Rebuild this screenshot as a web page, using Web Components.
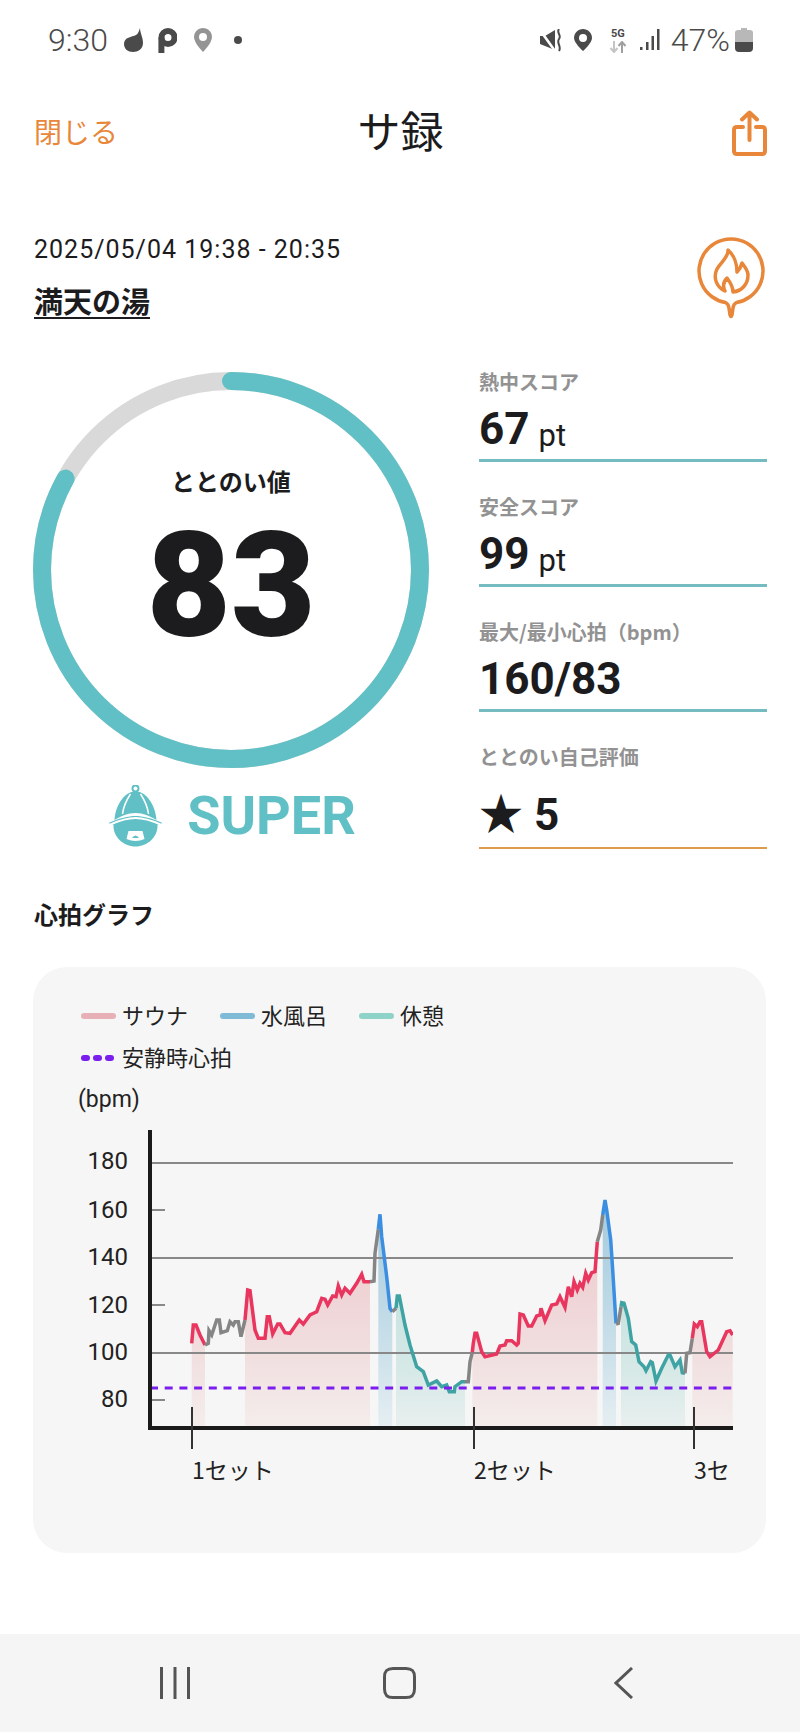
<!DOCTYPE html>
<html lang="ja">
<head>
<meta charset="utf-8">
<title>サ録</title>
<style>
    html, body { margin: 0; padding: 0; background: #fff; }
    body {
        width: 800px;
        height: 1732px;
        overflow: hidden;
        display: flex;
        flex-direction: column;
        font-family: Roboto, "Noto Sans CJK JP", sans-serif;
        color: #1c1c1e;
    }
</style>
</head>
<body>
    <status-bar></status-bar>
    <app-header title="サ録"></app-header>
    <session-meta date="2025/05/04 19:38 - 20:35" place="満天の湯"></session-meta>
    <score-row>
        <score-ring slot="ring" value="83" label="ととのい値" rank="SUPER"></score-ring>
        <stat-item label="熱中スコア" value="67" unit="pt"></stat-item>
        <stat-item label="安全スコア" value="99" unit="pt"></stat-item>
        <stat-item label="最大/最小心拍（bpm）" value="160/83"></stat-item>
        <stat-item label="ととのい自己評価" value="★ 5" accent></stat-item>
    </score-row>
    <section-title>心拍グラフ</section-title>
    <heart-card></heart-card>
    <nav-bar></nav-bar>

<script>
const ORANGE = "#e8873a";
const TEAL = "#61c0c5";

class StatusBar extends HTMLElement {
    constructor() {
        super();
        this.attachShadow({ mode: "open" }).innerHTML = `
            <style>
                :host { display: flex; height: 80px; padding: 0 47px 0 48px; align-items: center; justify-content: space-between; color: #4a4a4a; font: 300 32px Roboto, sans-serif; box-sizing: border-box; }
                .side { display: flex; align-items: center; }
                svg { display: block; }
                .five { position: relative; width: 18px; height: 25px; margin: 0 13px 0 17px; }
                .five b { display: block; font: 700 11px/11px Roboto, sans-serif; text-align: center; }
                .five svg { position: absolute; left: 0; bottom: 0; }
            </style>
            <div class="side">
                <span>9:30</span>
                <svg style="margin-left:16px" width="19" height="24" viewBox="0 0 19 24" fill="#4a4a4a"><path d="M16 0C16 5 19 9 19 15C19 21 14 24 9 24C4 24 0 21 0 16C0 9 8 9 12 7C14 6 15 3 16 0Z"/></svg>
                <svg style="margin-left:15px" width="19" height="25" viewBox="0 0 19 25" fill="none" stroke="#4a4a4a" stroke-width="6"><circle cx="10" cy="9.500" r="6.500"/><path d="M3.400 9.500V25"/></svg>
                <svg style="margin-left:17px" width="18" height="24" viewBox="0 0 18 24"><path fill="#949494" d="M9 0C4 0 0 4 0 9C0 15 9 24 9 24C9 24 18 15 18 9C18 4 14 0 9 0Z"/><circle cx="9" cy="9" r="4" fill="#fff"/></svg>
                <svg style="margin-left:22px" width="8" height="8" viewBox="0 0 8 8"><circle cx="4" cy="4" r="4" fill="#4a4a4a"/></svg>
            </div>
            <div class="side">
                <svg width="23" height="23" viewBox="0 0 23 23" fill="#4a4a4a"><path d="M0 7H5L15 1V21L0 15Z"/><path d="M0 1L15 22" stroke="#fff" stroke-width="2.500"/><path d="M19 0C16 4 22 6 19 10C16 14 22 17 19 22" fill="none" stroke="#4a4a4a" stroke-width="2"/></svg>
                <svg style="margin-left:11px" width="18" height="22" viewBox="0 0 18 22"><path fill="#4a4a4a" d="M9 0C4 0 0 4 0 9C0 14 9 22 9 22C9 22 18 14 18 9C18 4 14 0 9 0Z"/><circle cx="9" cy="9" r="4" fill="#fff"/></svg>
                <div class="five"><b>5G</b><svg width="18" height="12" viewBox="0 0 18 12" fill="none" stroke-width="2"><path d="M5 0V10M1.500 7L5 11L8.500 7" stroke="#c4c4c4"/><path d="M13 12V2M9.500 5L13 1L16.500 5" stroke="#a0a0a0"/></svg></div>
                <svg width="20" height="22" viewBox="0 0 20 22" fill="#4a4a4a"><rect x="0" y="18" width="2.500" height="3"/><rect x="6" y="13" width="2.500" height="8"/><rect x="11.500" y="7" width="2.500" height="14"/><rect x="17" y="0" width="2.500" height="21"/></svg>
                <span style="margin-left:11px">47%</span>
                <svg style="margin-left:5px" width="18" height="24" viewBox="0 0 18 24"><path fill="#b8b8b8" d="M6 0H12V2H15Q18 2 18 5V14H0V5Q0 2 3 2H6Z"/><path fill="#4a4a4a" d="M0 14H18V20Q18 24 14 24H4Q0 24 0 20Z"/></svg>
            </div>
        `;
    }
}

class AppHeader extends HTMLElement {
    constructor() {
        super();
        this.attachShadow({ mode: "open" }).innerHTML = `
            <style>
                :host { display: grid; grid-template-columns: 1fr auto 1fr; align-items: center; height: 106px; padding: 0 33px 0 34px; font-family: "Noto Sans CJK JP", sans-serif; }
                .close { color: ${ORANGE}; font-size: 28px; margin-top: -4px; }
                .title { font-size: 43px; color: #1c1c1e; margin-top: -8px; }
                svg { justify-self: end; display: block; }
            </style>
            <span class="close">閉じる</span>
            <span class="title">${this.getAttribute("title")}</span>
            <svg width="35" height="46" viewBox="0 0 35 46" fill="none" stroke="${ORANGE}" stroke-width="4" stroke-linecap="round" stroke-linejoin="round">
                <path d="M11 17H5Q2 17 2 20V41Q2 44 5 44H30Q33 44 33 41V20Q33 17 30 17H24"/>
                <path d="M17.500 30V3M10 9.500L17.500 2.500L25 9.500"/>
            </svg>
        `;
    }
}

class SessionMeta extends HTMLElement {
    constructor() {
        super();
        this.attachShadow({ mode: "open" }).innerHTML = `
            <style>
                :host { display: flex; justify-content: space-between; height: 182px; padding: 49px 31px 0 34px; box-sizing: border-box; }
                .date { font: 400 25px/30px Roboto, sans-serif; letter-spacing: 1px; color: #1c1c1e; }
                .place { margin-top: 17px; font: 700 29px/36px "Noto Sans CJK JP", sans-serif; text-decoration: underline; text-underline-offset: 4px; }
                svg { display: block; margin-top: -2px; }
            </style>
            <div>
                <div class="date">${this.getAttribute("date")}</div>
                <div class="place">${this.getAttribute("place")}</div>
            </div>
            <svg width="76" height="90" viewBox="693 232 76 90" fill="none" stroke="${ORANGE}" stroke-width="3.500" stroke-linejoin="round">
                <path d="M725.500 301.500A32 32 0 1 1 736.500 301.500Q733.500 303 733 307L732 314Q731 317 730 314L729 307Q728.500 303 725.500 301.500Z"/>
                <path d="M728 249C729 256 720 262 717 268C713 276 716 286 725 290C722 284 724 280 727 277C730 281 733 285 733 291C742 290 748 283 748 274C748 269 744 265 742 262C741 266 739 269 737 271C737 263 734 254 728 249Z"/>
            </svg>
        `;
    }
}

class ScoreRow extends HTMLElement {
    constructor() {
        super();
        this.attachShadow({ mode: "open" }).innerHTML = `
            <style>
                :host { display: flex; justify-content: space-between; padding: 0 33px; height: 482px; }
                .stats { width: 288px; display: flex; flex-direction: column; gap: 31px; }
            </style>
            <slot name="ring"></slot>
            <div class="stats"><slot></slot></div>
        `;
    }
}

class ScoreRing extends HTMLElement {
    constructor() {
        super();
        const value = Number(this.getAttribute("value"));
        const r = 189;
        const len = 2 * Math.PI * r;
        this.attachShadow({ mode: "open" }).innerHTML = `
            <style>
                :host { display: block; width: 396px; padding-top: 4px; }
                .ring { position: relative; width: 396px; height: 396px; }
                .ring svg { display: block; }
                .inner { position: absolute; inset: 0; display: flex; flex-direction: column; align-items: center; }
                .label { margin-top: 92px; font: 700 24px/34px "Noto Sans CJK JP", sans-serif; }
                .value { margin-top: 16px; font: 900 146px/146px Roboto, sans-serif; color: #1c1c1e; }
                .rank { display: flex; justify-content: center; align-items: center; gap: 24px; margin: 17px 0 0 2px; color: ${TEAL}; font: 700 54px/62px Roboto, sans-serif; }
                .rank svg { display: block; }
            </style>
            <div class="ring">
                <svg width="396" height="396" viewBox="0 0 396 396" fill="none" stroke-width="18">
                    <circle cx="198" cy="198" r="${r}" stroke="#d9d9d9"/>
                    <circle cx="198" cy="198" r="${r}" stroke="${TEAL}" stroke-linecap="round"
                        stroke-dasharray="${len * value / 100} ${len}" transform="rotate(-90 198 198)"/>
                </svg>
                <div class="inner">
                    <div class="label">${this.getAttribute("label")}</div>
                    <div class="value">${value}</div>
                </div>
            </div>
            <div class="rank">
                <svg width="55" height="62" viewBox="110.500 784 55 62">
                    <circle cx="138" cy="787.500" r="3" fill="none" stroke="${TEAL}" stroke-width="2"/>
                    <path fill="${TEAL}" d="M117 819C118 804 127 790.500 138 790.500C149 790.500 158 804 159 819C152 815 146 812 138 812C130 812 124 815 117 819Z"/>
                    <path fill="none" stroke="#fff" stroke-width="1.500" d="M133 793C129 799 126 805 125 813M143 793C147 799 150 805 151 813"/>
                    <path fill="none" stroke="#fff" stroke-width="2" d="M111 822.500L116 821"/>
                    <path fill="${TEAL}" d="M111 822C122 817 131 815 138 815C145 815 154 817 165 822L160 824C160.500 836 150 845.500 138 845.500C126 845.500 115.500 836 116 824Z"/>
                    <path fill="none" stroke="#fff" stroke-width="2" d="M113 823.500C123 819 131 817 138 817C145 817 153 819 163 823.500"/>
                    <path fill="#fff" d="M131 830H145L147 838Q138 842 129 838Z"/>
                    <path fill="${TEAL}" d="M134.500 837Q138 832 141.500 837Z"/>
                </svg>
                <span>${this.getAttribute("rank")}</span>
            </div>
        `;
    }
}

class StatItem extends HTMLElement {
    constructor() {
        super();
        const unit = this.getAttribute("unit");
        const accent = this.hasAttribute("accent");
        this.attachShadow({ mode: "open" }).innerHTML = `
            <style>
                :host { display: block; border-bottom: ${accent ? "2px solid #df9b4c" : "3px solid #74bcbf"}; }
                .label { font: 700 20px/28px "Noto Sans CJK JP", sans-serif; color: #929292; white-space: nowrap; }
                .value { display: flex; align-items: center; height: ${accent ? 76 : 63}px; padding-top: ${accent ? 12 : 3}px; box-sizing: border-box; font: 700 44px/63px Roboto, "Noto Sans CJK JP", sans-serif; color: #1c1c1e; }
                .unit { font-weight: 400; font-size: 31px; margin: 12px 0 0 9px; }
            </style>
            <div class="label">${this.getAttribute("label")}</div>
            <div class="value"><span>${this.getAttribute("value")}</span>${unit ? `<span class="unit">${unit}</span>` : ""}</div>
        `;
    }
}

class SectionTitle extends HTMLElement {
    constructor() {
        super();
        this.attachShadow({ mode: "open" }).innerHTML = `
            <style>
                :host { display: block; margin: 49px 0 38px; padding-left: 34px; font: 700 24px/30px "Noto Sans CJK JP", sans-serif; }
            </style>
            <slot></slot>
        `;
    }
}

// points read off the reference, origin + zoomed coords / 3
const A = (pts) => pts.map(([x, y]) => [140 + x / 3, 1180 + y / 3]);
const B = (pts) => pts.map(([x, y]) => [440 + x / 3, 1180 + y / 3]);

const SERIES = [
    ["s", A([[155,490],[160,435],[168,435],[180,465],[195,495]])],
    ["g", A([[195,495],[205,490],[207,452],[215,465],[230,420],[238,420],[243,458],[262,452],[270,425],[280,435],[285,425],[295,425],[303,470],[315,420]])],
    ["s", A([[315,420],[323,330],[330,332],[345,450],[355,475],[375,475],[382,410],[388,410],[398,462],[413,432],[420,432],[435,458],[450,460],[478,420],[490,432],[510,405],[530,395],[545,355],[555,358],[563,375],[578,348],[588,350],[595,318],[605,345],[615,325],[630,340],[650,310],[665,283],[672,305],[690,305]])],
    ["g", A([[690,305],[702,303],[705,220],[715,148]])],
    ["w", A([[715,148],[720,103],[725,170],[740,290],[750,385],[757,395]])],
    ["g", A([[757,395],[768,385]])],
    ["r", A([[768,385],[772,348],[778,348],[795,435],[810,495],[830,560],[850,575],[865,615],[890,603],[905,620],[920,615],[928,635],[943,635],[945,620],[965,605],[975,605]])],
    ["g", A([[975,605],[985,605],[990,545],[997,517]])],
    ["s", B([[97,517],[100,490],[105,460],[110,460],[125,515],[135,530],[170,522],[180,498],[195,495],[200,482],[215,482],[230,495],[235,490],[240,402],[250,405],[265,438],[275,438],[290,408],[300,405],[303,385],[315,422],[335,375],[350,372],[360,350],[375,382],[385,320],[395,350],[402,305],[412,330],[420,310],[428,322],[437,280],[445,300],[455,278],[465,275],[472,185]])],
    ["g", B([[472,185],[482,150],[488,105]])],
    ["w", B([[488,105],[495,60],[500,90],[512,180],[518,270],[528,430]])],
    ["g", B([[528,432],[535,430],[543,380]])],
    ["r", B([[543,380],[545,368],[552,370],[565,415],[575,485],[587,495],[597,545],[612,560],[618,572],[632,545],[637,548],[648,603],[665,565],[685,525],[690,525],[705,560],[720,540],[727,578],[735,580]])],
    ["g", B([[735,580],[740,520],[750,518],[757,475]])],
    ["s", B([[757,475],[763,432],[772,440],[780,425],[785,425],[800,515],[810,530],[835,510],[860,455],[870,452],[878,465]])],
];
const COLORS = { s: "#e8365f", g: "#858585", w: "#3b8ee0", r: "#3fa3a3" };
const FILLS = { s: "url(#fs)", w: "url(#fw)", r: "url(#fr)" };

class HeartCard extends HTMLElement {
    constructor() {
        super();
        const line = (pts) => pts.map((p) => p[0].toFixed(1) + " " + p[1].toFixed(1)).join(" L");
        const areas = SERIES.filter((s) => s[0] !== "g").map(([k, pts]) => {
            const x0 = pts[0][0], x1 = pts[pts.length - 1][0];
            return `<path fill="${FILLS[k]}" d="M${x0.toFixed(1)} 1426 L${line(pts)} L${x1.toFixed(1)} 1426Z"/>`;
        }).join("");
        const curves = SERIES.map(([k, pts]) => `<path stroke="${COLORS[k]}" d="M${line(pts)}"/>`).join("");
        const grid = [1163, 1258, 1353].map((y) => `<path d="M150 ${y}H733"/>`).join("");
        const minor = [1210, 1305, 1400].map((y) => `<path d="M152 ${y}H165"/>`).join("");
        const yLabels = [[180, 1161], [160, 1210], [140, 1257], [120, 1305], [100, 1352], [80, 1399]]
            .map(([v, y]) => `<text x="128" y="${y + 8}" text-anchor="end">${v}</text>`).join("");
        const ticks = [[192, "1セット"], [474, "2セット"], [694, "3セット"]]
            .map(([x, t]) => `<path d="M${x} 1407V1449" stroke="#333" stroke-width="2"/><text x="${x}" y="1479">${t}</text>`).join("");
        this.attachShadow({ mode: "open" }).innerHTML = `
            <style>
                :host { display: block; width: 733px; height: 586px; margin-left: 33px; padding: 32px 0 0 37px; box-sizing: border-box; background: #f7f6f6; border-radius: 34px; font: 400 22px/30px "Noto Sans CJK JP", sans-serif; color: #222; }
                .legend { display: flex; margin-left: 11px; height: 30px; align-items: center; gap: 32px; margin-bottom: 12px; }
                .item { display: flex; align-items: center; gap: 6px; }
                .sw { width: 35px; height: 6px; margin-top: 4px; border-radius: 3px; }
                .item svg { display: block; margin: 4px 0 0; }
                .bpm { font: 400 23px/30px Roboto, sans-serif; margin: 14px 0 0 8px; }
                svg.plot { display: block; margin-top: 5px; }
                text { font: 400 23px "Noto Sans CJK JP", Roboto, sans-serif; fill: #222; }
                .yl text { font-family: Roboto, sans-serif; font-size: 24px; }
            </style>
            <div class="legend">
                <div class="item"><span class="sw" style="background:#e6b0b6"></span>サウナ</div>
                <div class="item"><span class="sw" style="background:#7fbad6"></span>水風呂</div>
                <div class="item"><span class="sw" style="background:#8fd3c8"></span>休憩</div>
            </div>
            <div class="legend" style="margin-bottom:0">
                <div class="item"><svg width="35" height="6" viewBox="0 0 35 6" fill="#7a1ef0"><rect x="0" width="9" height="6" rx="3"/><rect x="12" width="9" height="6" rx="3"/><rect x="24" width="9" height="6" rx="3"/></svg>安静時心拍</div>
            </div>
            <div class="bpm">(bpm)</div>
            <svg class="plot" width="663" height="380" viewBox="70 1120 663 380">
                <defs>
                    <linearGradient id="fs" gradientUnits="userSpaceOnUse" x1="0" y1="1260" x2="0" y2="1428"><stop offset="0" stop-color="#e9b9bd" stop-opacity=".65"/><stop offset="1" stop-color="#f3e9e8" stop-opacity=".7"/></linearGradient>
                    <linearGradient id="fw" gradientUnits="userSpaceOnUse" x1="0" y1="1200" x2="0" y2="1428"><stop offset="0" stop-color="#8fc0d8" stop-opacity=".8"/><stop offset="1" stop-color="#e6eff2"/></linearGradient>
                    <linearGradient id="fr" gradientUnits="userSpaceOnUse" x1="0" y1="1300" x2="0" y2="1428"><stop offset="0" stop-color="#b5dcd8" stop-opacity=".7"/><stop offset="1" stop-color="#e9f0ef"/></linearGradient>
                </defs>
                ${areas}
                <g stroke="#888" stroke-width="2" fill="none">${grid}${minor}</g>
                <g fill="none" stroke-width="3.500" stroke-linejoin="miter">${curves}</g>
                <path d="M150 1388H733" stroke="#7a1ef0" stroke-width="3" stroke-dasharray="8 6.700"/>
                <path d="M150 1130V1430M148 1428H733" stroke="#1a1a1a" stroke-width="4" fill="none"/>
                <g class="yl">${yLabels}</g>
                ${ticks}
            </svg>
        `;
    }
}

class NavBar extends HTMLElement {
    constructor() {
        super();
        this.attachShadow({ mode: "open" }).innerHTML = `
            <style>
                :host { display: flex; align-items: center; height: 98px; margin-top: auto; padding-left: 160px; background: #f5f5f6; }
                svg { display: block; }
            </style>
            <svg width="30" height="32" viewBox="0 0 30 32" stroke="#555" stroke-width="3"><path d="M1.500 0V32M15 0V32M28.500 0V32"/></svg>
            <svg style="margin-left:193px" width="33" height="32" viewBox="0 0 33 32" fill="none" stroke="#555" stroke-width="3"><path d="M10 1.500H23C29 1.500 31.500 4 31.500 10V22C31.500 28 29 30.500 23 30.500H10C4 30.500 1.500 28 1.500 22V10C1.500 4 4 1.500 10 1.500Z"/></svg>
            <svg style="margin-left:198px" width="19" height="32" viewBox="0 0 19 32" fill="none" stroke="#555" stroke-width="3"><path d="M18 1L2 16L18 31"/></svg>
        `;
    }
}

customElements.define("status-bar", StatusBar);
customElements.define("app-header", AppHeader);
customElements.define("session-meta", SessionMeta);
customElements.define("score-row", ScoreRow);
customElements.define("score-ring", ScoreRing);
customElements.define("stat-item", StatItem);
customElements.define("section-title", SectionTitle);
customElements.define("heart-card", HeartCard);
customElements.define("nav-bar", NavBar);
</script>
</body>
</html>
